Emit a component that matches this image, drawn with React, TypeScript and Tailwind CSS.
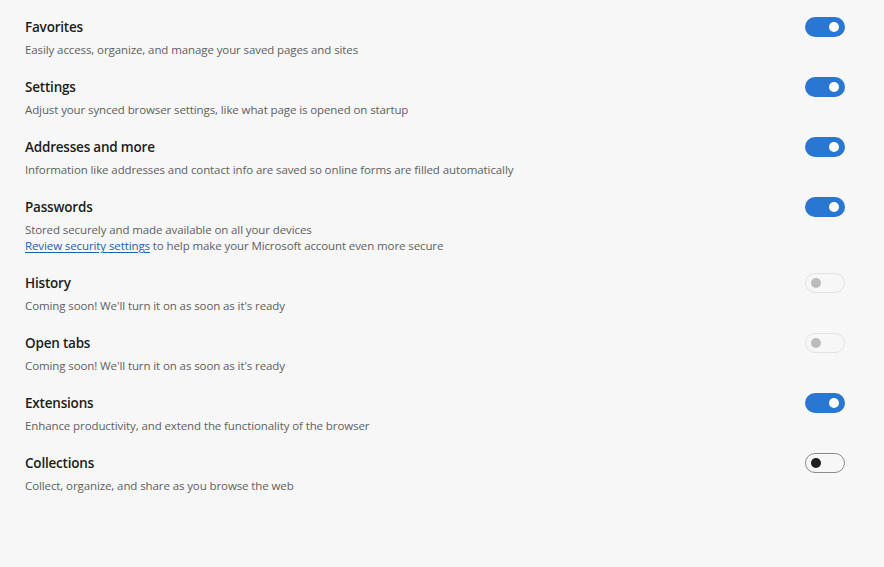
import React from "react";

type ToggleState = "on" | "off" | "disabled";

interface SyncItem {
  title: string;
  lines: React.ReactNode[];
  state: ToggleState;
}

const items: SyncItem[] = [
  { title: "Favorites", lines: ["Easily access, organize, and manage your saved pages and sites"], state: "on" },
  { title: "Settings", lines: ["Adjust your synced browser settings, like what page is opened on startup"], state: "on" },
  {
    title: "Addresses and more",
    lines: ["Information like addresses and contact info are saved so online forms are filled automatically"],
    state: "on",
  },
  {
    title: "Passwords",
    lines: [
      "Stored securely and made available on all your devices",
      <>
        <a href="#" className="text-[#1a62b4] underline underline-offset-2 decoration-[#1a62b4]">
          Review security settings
        </a>{" "}
        to help make your Microsoft account even more secure
      </>,
    ],
    state: "on",
  },
  { title: "History", lines: ["Coming soon! We'll turn it on as soon as it's ready"], state: "disabled" },
  { title: "Open tabs", lines: ["Coming soon! We'll turn it on as soon as it's ready"], state: "disabled" },
  { title: "Extensions", lines: ["Enhance productivity, and extend the functionality of the browser"], state: "on" },
  { title: "Collections", lines: ["Collect, organize, and share as you browse the web"], state: "off" },
];

function Toggle({ state }: { state: ToggleState }) {
  if (state === "on") {
    return (
      <div className="w-10 h-5 rounded-full bg-[#2a76d3] flex items-center justify-end pr-[6px] shrink-0">
        <div className="w-[10px] h-[10px] rounded-full bg-white" />
      </div>
    );
  }
  if (state === "disabled") {
    return (
      <div className="w-10 h-5 rounded-full border border-[#e3e3e3] flex items-center pl-[5px] shrink-0">
        <div className="w-[10px] h-[10px] rounded-full bg-[#bcbcbc]" />
      </div>
    );
  }
  return (
    <div className="w-10 h-5 rounded-full border border-[#8a8a8a] flex items-center pl-[5px] shrink-0">
      <div className="w-[10px] h-[10px] rounded-full bg-[#1f1f1f]" />
    </div>
  );
}

export default function App() {
  return (
    <div
      className="w-[884px] h-[567px] bg-[#f7f7f7] pl-[25px] pr-[39px] pt-[17px] flex flex-col gap-[19px]"
      style={{ fontFamily: '"Open Sans", "Noto Sans", sans-serif' }}
    >
      {items.map((item) => (
        <div key={item.title} className="flex items-start justify-between">
          <div className="flex flex-col">
            <h3 className="text-[13.5px] leading-5 font-semibold tracking-[-0.2px] text-[#1c1c1c] mb-[5px]">
              {item.title}
            </h3>
            {item.lines.map((line, i) => (
              <p key={i} className="text-[11.5px] leading-4 tracking-[-0.1px] text-[#606060]">
                {line}
              </p>
            ))}
          </div>
          <Toggle state={item.state} />
        </div>
      ))}
    </div>
  );
}
